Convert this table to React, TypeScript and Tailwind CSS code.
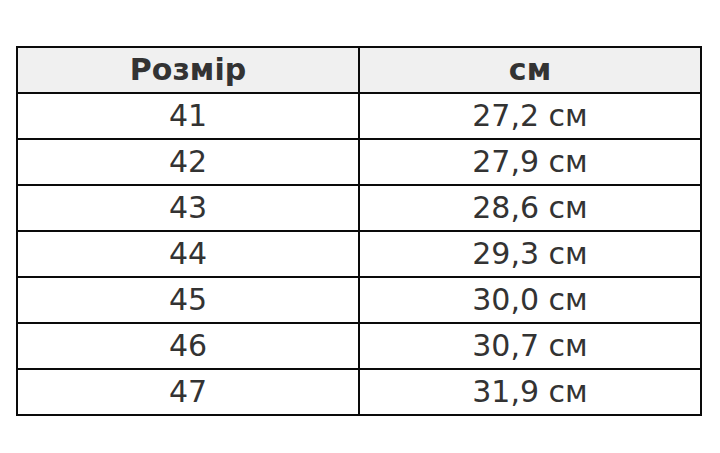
const rows: [string, string][] = [
  ['41', '27,2 см'],
  ['42', '27,9 см'],
  ['43', '28,6 см'],
  ['44', '29,3 см'],
  ['45', '30,0 см'],
  ['46', '30,7 см'],
  ['47', '31,9 см'],
];

export default function App() {
  return (
    <div
      className="w-[720px] h-[453px] bg-white pt-[46px] pl-[16px]"
      style={{ fontFamily: '"DejaVu Sans", sans-serif' }}
    >
      <table className="w-[686px] border-collapse border-2 border-[#0a0a0a] text-[#333] table-fixed">
        <thead>
          <tr className="h-[46px] bg-[#f0f0f0]">
            <th className="border-2 border-[#0a0a0a] text-[30px] font-bold p-0 leading-none">Розмір</th>
            <th className="border-2 border-[#0a0a0a] text-[30px] font-bold p-0 leading-none">см</th>
          </tr>
        </thead>
        <tbody>
          {rows.map(([size, cm]) => (
            <tr key={size} className="h-[46px]">
              <td className="border-2 border-[#0a0a0a] text-center text-[30px] p-0 leading-none">{size}</td>
              <td className="border-2 border-[#0a0a0a] text-center text-[30px] p-0 leading-none">{cm}</td>
            </tr>
          ))}
        </tbody>
      </table>
    </div>
  );
}
